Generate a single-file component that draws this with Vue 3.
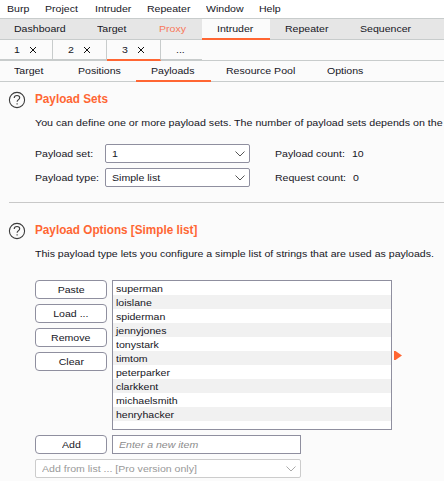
<script setup>
const menus = [
  { t: 'Burp', w: 38 },
  { t: 'Project', w: 50 },
  { t: 'Intruder', w: 52 },
  { t: 'Repeater', w: 59 },
  { t: 'Window', w: 53 },
  { t: 'Help', w: 40 },
]
const tools = [
  { t: 'Dashboard', w: 82 },
  { t: 'Target', w: 63 },
  { t: 'Proxy', w: 57, hot: true },
  { t: 'Intruder', w: 68, active: true },
  { t: 'Repeater', w: 75 },
  { t: 'Sequencer', w: 99 },
]
const attacks = [
  { t: '1', w: 53 },
  { t: '2', w: 54 },
  { t: '3', w: 54, active: true },
]
const sections = [
  { t: 'Target', w: 63 },
  { t: 'Positions', w: 73 },
  { t: 'Payloads', w: 75, active: true },
  { t: 'Resource Pool', w: 101 },
  { t: 'Options', w: 80 },
]
const actions = ['Paste', 'Load ...', 'Remove', 'Clear']
const items = ['superman', 'loislane', 'spiderman', 'jennyjones', 'tonystark', 'timtom', 'peterparker', 'clarkkent', 'michaelsmith', 'henryhacker']
</script>

<template>
  <main class="app">
    <nav class="menubar">
      <span v-for="m in menus" :key="m.t" class="tab" :style="{ width: m.w + 'px' }"><i>{{ m.t }}</i></span>
    </nav>
    <nav class="tools">
      <span v-for="m in tools" :key="m.t" class="tab" :class="{ active: m.active, hot: m.hot }" :style="{ width: m.w + 'px' }"><i>{{ m.t }}</i></span>
    </nav>
    <nav class="attacks">
      <span v-for="m in attacks" :key="m.t" class="attack" :class="{ active: m.active }" :style="{ width: m.w + 'px' }">
        <i>{{ m.t }}</i>
        <svg class="close" width="6" height="6" viewBox="0 0 6 6" shape-rendering="crispEdges"><path d="M0 0h1v1h-1zM5 0h1v1h-1zM1 1h1v1h-1zM4 1h1v1h-1zM2 2h2v2h-2zM1 4h1v1h-1zM4 4h1v1h-1zM0 5h1v1h-1zM5 5h1v1h-1z" /></svg>
      </span>
      <span class="more"><i>...</i></span>
    </nav>
    <nav class="sections">
      <span v-for="m in sections" :key="m.t" class="tab" :class="{ active: m.active }" :style="{ width: m.w + 'px' }"><i>{{ m.t }}</i></span>
    </nav>

    <section class="sets">
      <svg class="help" width="18" height="18" viewBox="0 0 18 18"><circle cx="9" cy="9" r="7.6" /><path d="M6.200 7C6.200 5.300 7.400 4.500 9 4.500s2.700.9 2.700 2.300c0 1.800-2.600 1.900-2.600 4" /><path d="M9.100 12.200v1.400" /></svg>
      <div class="body">
        <h2><i>Payload Sets</i></h2>
        <p class="desc wide"><i>You can define one or more payload sets. The number of payload sets depends on the</i></p>
        <div class="form">
          <label><i>Payload set:</i></label>
          <div class="select"><i>1</i><svg width="12" height="8" viewBox="0 0 12 8"><path d="M1.500 1.500 6 6l4.500-4.500" /></svg></div>
          <span class="count"><i>Payload count:</i><i>10</i></span>
          <label><i>Payload type:</i></label>
          <div class="select"><i>Simple list</i><svg width="12" height="8" viewBox="0 0 12 8"><path d="M1.500 1.500 6 6l4.500-4.500" /></svg></div>
          <span class="count"><i>Request count:</i><i>0</i></span>
        </div>
      </div>
    </section>
    <hr />
    <section class="options">
      <svg class="help" width="18" height="18" viewBox="0 0 18 18"><circle cx="9" cy="9" r="7.6" /><path d="M6.200 7C6.200 5.300 7.400 4.500 9 4.500s2.700.9 2.700 2.300c0 1.800-2.600 1.900-2.600 4" /><path d="M9.100 12.200v1.400" /></svg>
      <div class="body">
        <h2><i>Payload Options [Simple list]</i></h2>
        <p class="desc"><i>This payload type lets you configure a simple list of strings that are used as payloads.</i></p>
        <div class="editor">
          <div class="buttons"><button v-for="a in actions" :key="a"><i>{{ a }}</i></button></div>
          <ul class="list"><li v-for="t in items" :key="t"><i>{{ t }}</i></li></ul>
          <svg class="marker" width="8" height="9" viewBox="0 0 8 9"><path d="M0 0h1.500L8 4.500 1.500 9H0z" /></svg>
        </div>
        <div class="adder">
          <button><i>Add</i></button>
          <div class="entry"><i>Enter a new item</i></div>
        </div>
        <div class="select disabled"><i>Add from list ... [Pro version only]</i><svg width="12" height="8" viewBox="0 0 12 8"><path d="M1.500 1.500 6 6l4.500-4.500" /></svg></div>
      </div>
    </section>
  </main>
</template>

<style>
body { margin: 0; background: #fbfbfb; overflow: hidden; }
</style>

<style scoped>
* { box-sizing: border-box; }
.app {
  width: 444px; height: 481px; overflow: hidden; background: #fbfbfb; color: #16161e;
  font: 9.5px/14px "Liberation Sans", Arial, sans-serif; white-space: nowrap;
}
i { display: inline-block; font-style: normal; transform: scaleX(1.111); transform-origin: 0 50%; }
nav { display: flex; }
nav span { flex: none; }
.menubar { height: 18px; padding-left: 7px; background: #fff; line-height: 17px; }
.tools { height: 22px; border-top: 1px solid #c8cccc; border-bottom: 1px solid #c8cccc; background: #e6e6e6; line-height: 19px; }
.tools span { height: 21px; padding-left: 15px; }
.tools span:first-child, .sections span:first-child { padding-left: 14px; }
.tools .active { background: #fbfbfb; border-bottom: 2px solid #ff6633; }
.tools .hot { padding-left: 14px; color: #f8775a; }
.attacks { height: 21px; border-bottom: 1px solid #c8cccc; line-height: 20px; }
.attack { display: flex; align-items: center; gap: 11px; height: 21px; padding-left: 15px; border-right: 1px solid #c8cccc; border-bottom: 2px solid #c8cccc; }
.attack:first-child { padding-left: 14px; }
.attack.active { border-bottom-color: #ff6633; }
.close { fill: #111; margin-top: 1px; }
.more { width: 41px; height: 20px; padding-left: 15px; border-bottom: 1px solid #c8cccc; }
.sections { height: 21px; border-bottom: 1px solid #c8cccc; line-height: 20px; }
.sections span { height: 21px; padding-left: 15px; }
.sections .active { border-bottom: 2px solid #ff6633; }
section { display: flex; padding-left: 8px; }
.sets { height: 120px; padding-top: 9px; }
.options { padding-top: 19px; }
.help { flex: none; margin-right: 9px; fill: none; stroke: #3c3c3c; stroke-width: 1.100; }
.body { flex: none; width: 420px; }
h2 { margin: 0; color: #ff6633; font: bold 12px/16px "Liberation Sans", Arial, sans-serif; }
h2 i { transform: scaleX(0.978); }
.desc { margin: 9px 0 0; line-height: 14px; }
.wide i { transform: scaleX(1.122); }
.form { display: grid; grid-template-columns: 70px 145px 1fr; row-gap: 5px; margin-top: 14px; line-height: 19px; }
.select {
  display: flex; align-items: center; justify-content: space-between; height: 19px; padding: 0 3px 0 6px;
  border: 1px solid #8f8f9f; border-radius: 2px; background: #fff; line-height: 17px;
}
.select svg { fill: none; stroke: #555; stroke-width: 1; }
.count { display: flex; gap: 14px; padding-left: 25px; }
hr { height: 1px; margin: 0 0 0 9px; border: 0; background: #c8c8c8; }
.editor { display: flex; margin-top: 19px; }
.buttons { display: flex; flex-direction: column; gap: 5px; width: 77px; }
button { width: 72px; height: 19px; padding: 0; border: 1px solid #8f8f9f; border-radius: 4px; background: #fff; color: inherit; font: inherit; }
button i { transform-origin: 50% 50%; }
.list { width: 280px; height: 150px; margin: 0; padding: 0; border: 1px solid #8f8f9f; background: #fff; list-style: none; }
.list li { height: 14px; padding-left: 3px; line-height: 15px; }
.list li:nth-child(even) { background: #f1f1f1; }
.marker { margin: 71px 0 0 2px; fill: #ff6633; }
.adder { display: flex; gap: 5px; margin: 5px 0; }
.entry { width: 189px; height: 19px; padding-left: 6px; border: 1px solid #8f8f9f; background: #fff; color: #8c8c8c; line-height: 17px; }
.entry i { font-style: italic; }
.disabled { width: 266px; border-color: #ccc; color: #999; }
.disabled svg { stroke: #aaa; }
</style>
